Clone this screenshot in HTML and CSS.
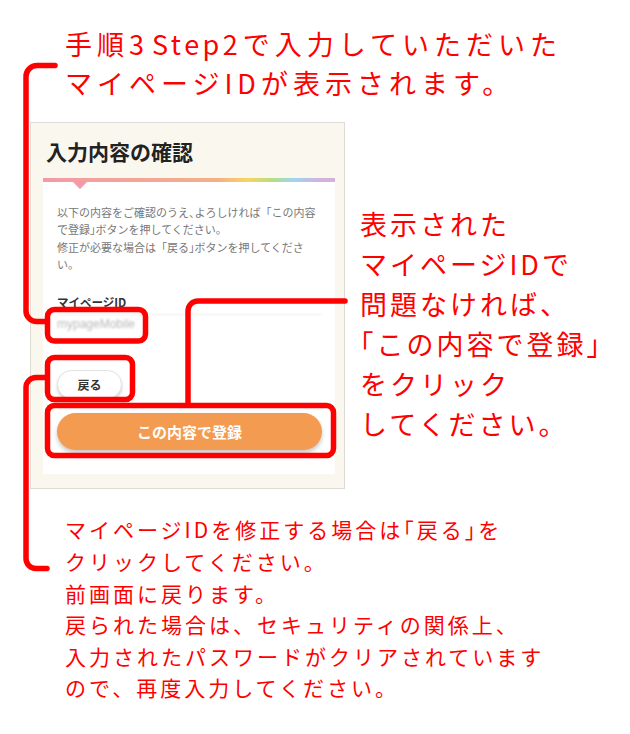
FILE: index.html
```html
<!DOCTYPE html>
<html lang="ja">
<head>
<meta charset="utf-8">
<title>入力内容の確認</title>
<link rel="stylesheet" href="styles.css">
</head>
<body>
<div class="page">
  <p class="note note-top">手順3<span class="latin">Step2</span>で入力していただいた<br>マイページIDが表示されます。</p>

  <div class="row">
    <section class="card">
      <h2 class="card-title">入力内容の確認</h2>
      <div class="divider"></div>
      <div class="panel">
        <p class="lead">以下の内容をご確認のうえ<span class="h">、</span>よろしければ「この内容<br>で登録<span class="h">」</span>ボタンを押してください。<br>修正が必要な場合は「戻る<span class="h">」</span>ボタンを押してくださ<br>い。</p>
        <div class="field">
          <div class="field-label">マイページID</div>
          <div class="field-value">mypageMobile</div>
        </div>
        <div class="actions">
          <button class="btn-back" type="button">戻る</button>
          <button class="btn-submit" type="button">この内容で登録</button>
        </div>
      </div>
    </section>

    <p class="note note-right">表示された<br>マイページIDで<br>問題なければ、<br><span class="h">「</span>この内容で登録<span class="h">」</span><br>をクリック<br>してください。</p>
  </div>

  <p class="note note-bottom">マイページIDを修正する場合は<span class="h">「</span>戻る<span class="h">」</span>を<br>クリックしてください。<br>前画面に戻ります。<br>戻られた場合は、セキュリティの関係上、<br>入力されたパスワードがクリアされています<br>ので、再度入力してください。</p>

  <svg class="marks" width="630" height="734" viewBox="0 0 630 734" aria-hidden="true">
    <g fill="none" stroke="#ff0000" stroke-width="5.5" stroke-linecap="round" stroke-linejoin="round">
      <path d="M55 65.5 H37 A11 11 0 0 0 26 76.5 V311 A10.5 10.5 0 0 0 36.5 321.5 H47"/>
      <path d="M47 377.5 H36 A10 10 0 0 0 26 387.5 V558.5 A10 10 0 0 0 36 568.5 H47"/>
      <path d="M345 301 H198 A10 10 0 0 0 188 311 V404"/>
      <rect x="47.5" y="309.5" width="98" height="31.5" rx="7"/>
      <rect x="47.5" y="357.5" width="85" height="42" rx="7"/>
      <rect x="47.5" y="405.5" width="286" height="50" rx="7"/>
    </g>
  </svg>
</div>
</body>
</html>
```

FILE: styles.css
```css
* {
  box-sizing: border-box;
}

html, body {
  margin: 0;
  padding: 0;
  background: #ffffff;
}

body {
  font-family: "Noto Sans CJK JP", "Noto Sans", sans-serif;
}

.page {
  position: relative;
  width: 630px;
  height: 734px;
  padding-top: 24px;
  overflow: hidden;
  background: #ffffff;
}

.note {
  margin: 0;
  color: #ff0000;
  font-weight: 400;
  white-space: nowrap;
}

.h {
  font-feature-settings: "halt";
}

.note-top {
  margin-left: 65px;
  font-size: 27px;
  line-height: 39px;
  letter-spacing: 5px;
}

.latin {
  margin-left: 3px;
  letter-spacing: 3.5px;
}

.latin::after {
  content: "";
  margin-right: 1.5px;
}

.row {
  display: flex;
  align-items: flex-start;
  margin-top: 20px;
}

.card {
  margin-left: 30px;
  width: 315px;
  border: 1px solid #dedbd4;
  background: #faf7ef;
  padding: 14px 9px 14px 12px;
}

.card-title {
  margin: 0 0 0 3px;
  font-size: 21px;
  line-height: 28px;
  font-weight: 700;
  color: #222222;
}

.divider {
  position: relative;
  z-index: 1;
  margin-top: 13px;
  height: 4px;
  background: linear-gradient(90deg, #f29aa7 0%, #f3a497 30%, #f5b085 60%, #f8d462 70%, #b9de7d 78%, #9ed5f0 86%, #d2b3dc 95%, #d4b1dc 100%);
}

.divider::after {
  content: "";
  position: absolute;
  left: 29px;
  top: 3px;
  border-left: 8px solid transparent;
  border-right: 8px solid transparent;
  border-top: 8px solid #f29aa7;
}

.panel {
  background: #ffffff;
  padding: 21.6px 13px 24px 14px;
}

.lead {
  margin: 0;
  font-size: 11px;
  line-height: 17.5px;
  color: #777777;
  white-space: nowrap;
}

.field {
  margin-top: 20.4px;
}

.field-label {
  font-size: 11.5px;
  line-height: 16px;
  font-weight: 700;
  color: #333333;
}

.field-value {
  margin-top: 4px;
  border-top: 1px solid #ebebeb;
  padding-top: 1.5px;
  font-family: "Liberation Sans", Arial, sans-serif;
  font-size: 12px;
  line-height: 16px;
  color: #b8b8b8;
  filter: blur(0.9px);
}

.actions {
  display: flex;
  flex-direction: column;
  align-items: flex-start;
  gap: 14px;
  margin-top: 38px;
}

.btn-back {
  width: 65px;
  height: 29px;
  border: 1px solid #e2e2e2;
  border-radius: 15px;
  background: #ffffff;
  box-shadow: 0 2px 3px rgba(0, 0, 0, 0.18);
  font-family: "Noto Sans CJK JP", sans-serif;
  font-size: 12px;
  font-weight: 700;
  color: #333333;
  padding: 0;
}

.btn-submit {
  width: 265px;
  height: 37px;
  border: none;
  border-radius: 19px;
  background: #f39b50;
  box-shadow: 0 3px 4px rgba(0, 0, 0, 0.22);
  font-family: "Noto Sans CJK JP", sans-serif;
  font-size: 15px;
  font-weight: 700;
  color: #ffffff;
  padding: 0;
}

.note-right {
  margin-left: 15px;
  margin-top: 82px;
  font-size: 27px;
  line-height: 40px;
  letter-spacing: 3px;
}

.note-bottom {
  margin-left: 65px;
  margin-top: 25px;
  font-size: 21px;
  line-height: 31.6px;
  letter-spacing: 3px;
}

.marks {
  position: absolute;
  left: 0;
  top: 0;
  pointer-events: none;
}
```
